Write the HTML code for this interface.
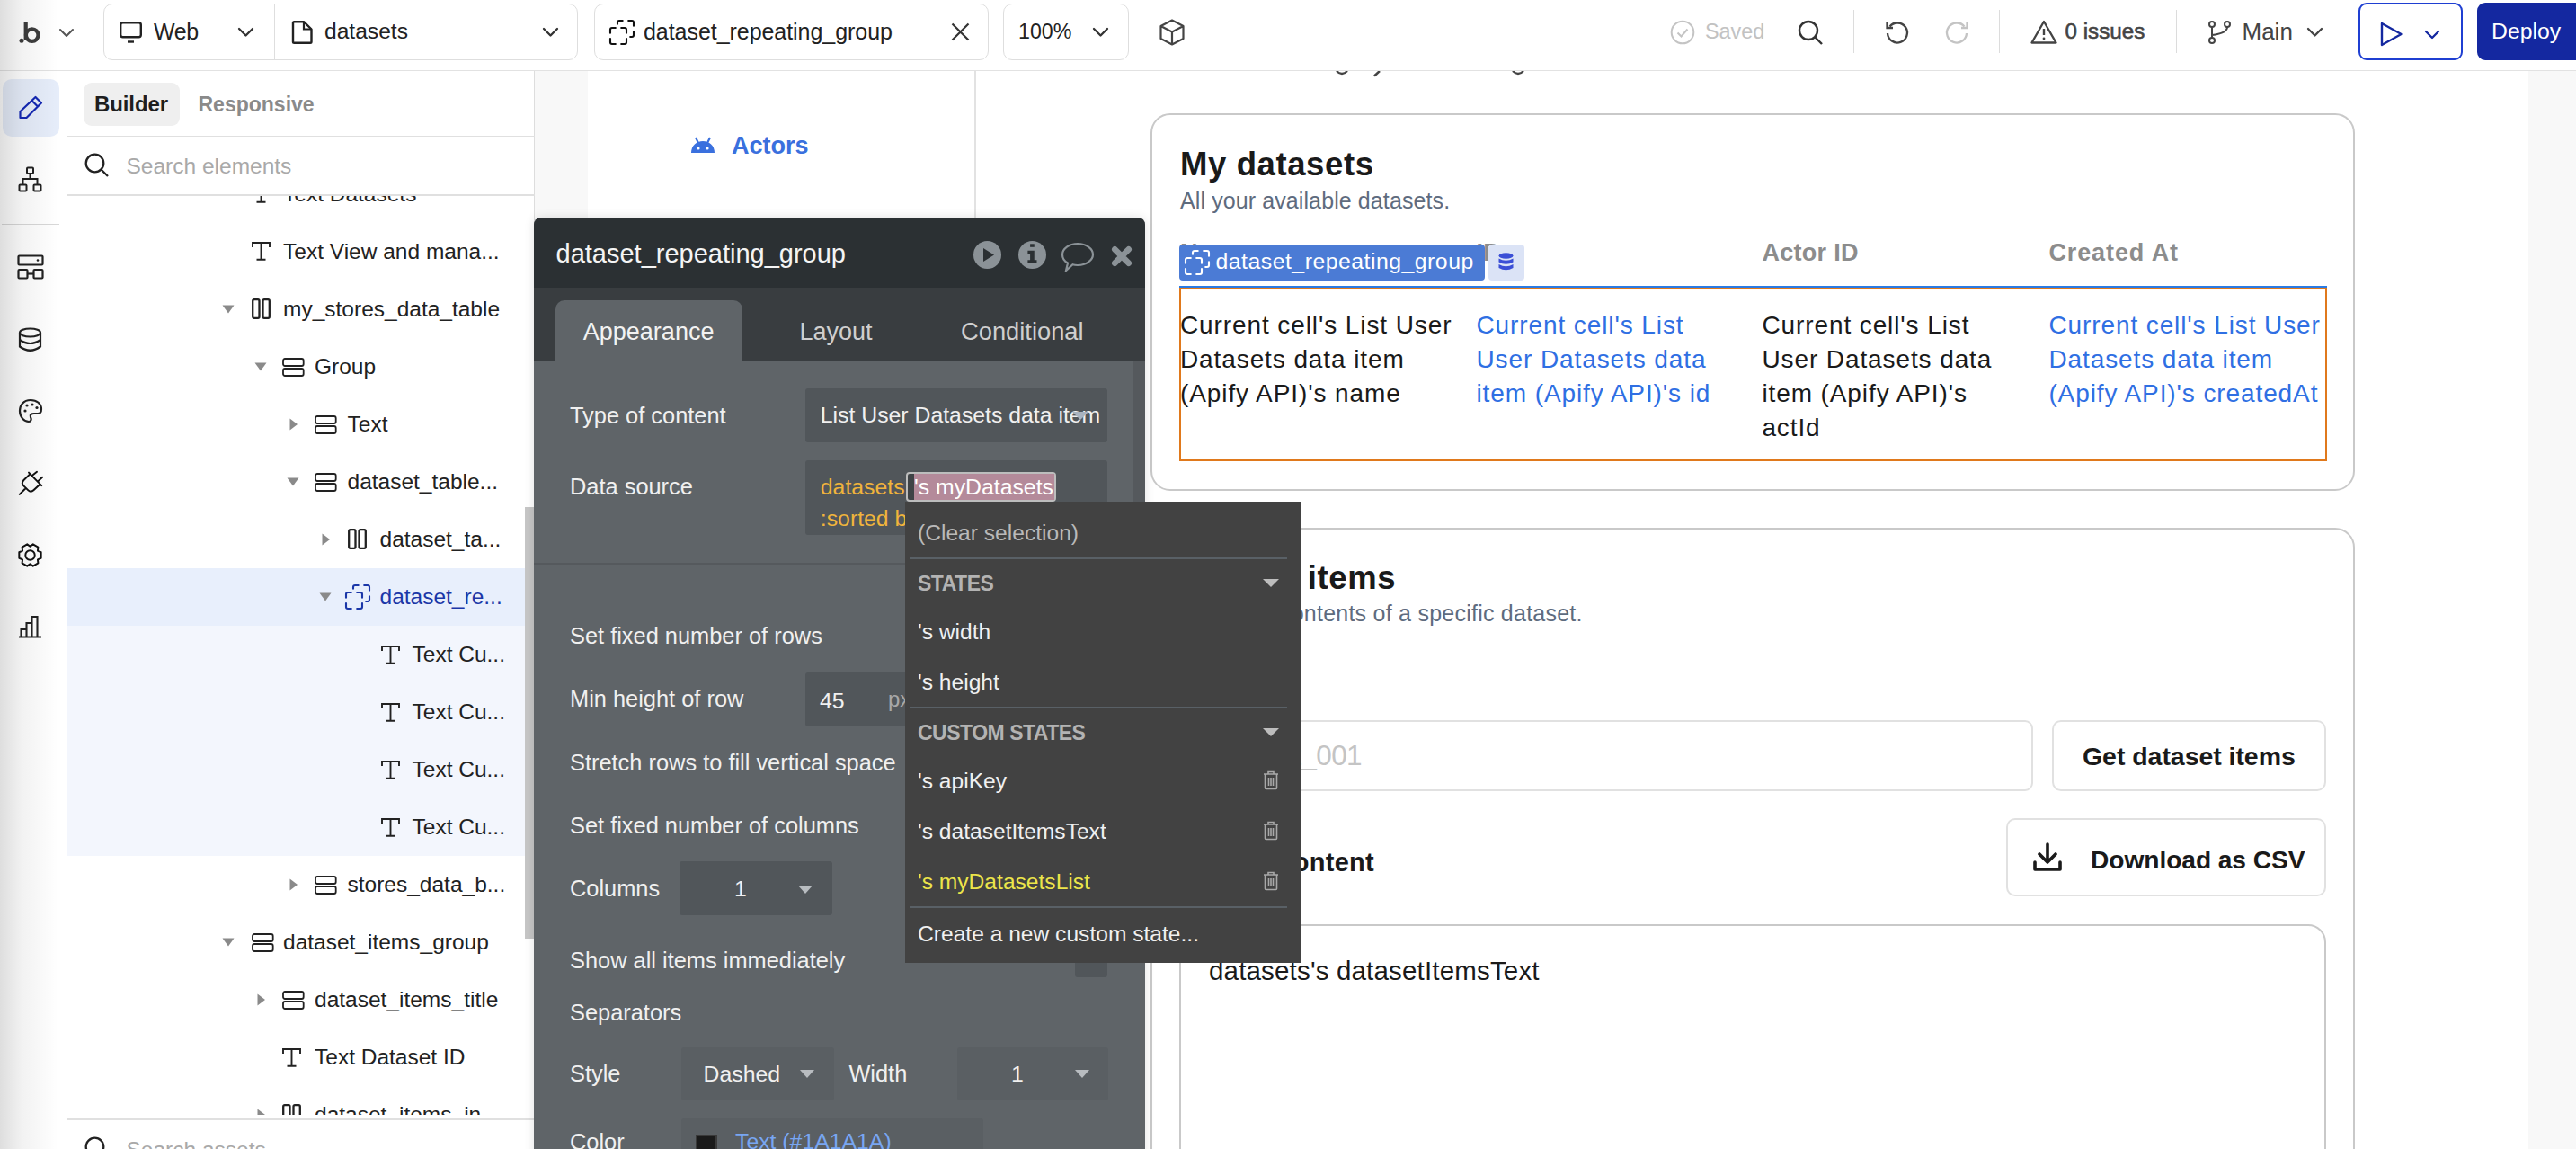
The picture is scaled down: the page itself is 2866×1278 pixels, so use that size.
<!DOCTYPE html><html><head><meta charset="utf-8"><style>
html,body{margin:0;padding:0;}
body{width:2866px;height:1278px;overflow:hidden;position:relative;background:#fff;font-family:"Liberation Sans",sans-serif;}
.a{position:absolute;box-sizing:border-box;}
.t{position:absolute;white-space:nowrap;line-height:1;}
</style></head><body>
<div class="a" style="left:595px;top:79px;width:2271px;height:1199px;background:#f8f8f8"></div>
<div class="a" style="left:654px;top:79px;width:2159px;height:1199px;background:#fff"></div>
<div class="a" style="left:1084px;top:79px;width:2px;height:181px;background:#e2e2e2"></div>
<svg class="a" style="left:767px;top:152px;" width="30" height="19" viewBox="0 0 30 19" fill="none"><path d="M2 18 C2 10 8 5 15 5 C22 5 28 10 28 18 Z" fill="#3a70de"/><path d="M7 1 L10 7 M23 1 L20 7" stroke="#3a70de" stroke-width="2.2"/><circle cx="10" cy="13" r="1.6" fill="#fff"/><circle cx="20" cy="13" r="1.6" fill="#fff"/></svg>
<div class="t" style="left:814px;top:149.14px;font-size:27px;color:#3a70de;font-weight:700;letter-spacing:0px;">Actors</div>
<svg class="a" style="left:1485px;top:74px;" width="220" height="12" viewBox="0 0 220 12" fill="none"><path d="M2 5 Q8 11 14 5" stroke="#444" stroke-width="2.4"/><path d="M50 5 L44 10.5" stroke="#444" stroke-width="2.4"/><path d="M198 5 Q204 11 210 5" stroke="#444" stroke-width="2.4"/></svg>
<div class="a" style="left:1280px;top:126px;width:1340px;height:420px;border:2px solid #c9c9c9;border-radius:22px;background:#fff"></div>
<div class="t" style="left:1313px;top:165.10px;font-size:36.5px;color:#1a1a1a;font-weight:700;letter-spacing:0.6px;">My datasets</div>
<div class="t" style="left:1313px;top:211.34px;font-size:25px;color:#5e6b7e;font-weight:400;letter-spacing:0.1px;">All your available datasets.</div>
<div class="t" style="left:1313px;top:268.14px;font-size:27px;color:#8c8c8c;font-weight:700;letter-spacing:0.3px;">Name</div>
<div class="t" style="left:1642.5px;top:268.14px;font-size:27px;color:#8c8c8c;font-weight:700;letter-spacing:0.3px;">ID</div>
<div class="t" style="left:1960.4px;top:268.14px;font-size:27px;color:#8c8c8c;font-weight:700;letter-spacing:0.3px;">Actor ID</div>
<div class="t" style="left:2279.4px;top:268.14px;font-size:27px;color:#8c8c8c;font-weight:700;letter-spacing:0.9px;">Created At</div>
<div class="a" style="left:1312px;top:272px;width:340px;height:40px;background:#4b7bd5;border-radius:4px"></div>
<svg class="a" style="left:1317px;top:277px;" width="30" height="30" viewBox="-1 -1 30 30" fill="none"><path d="M1 14.7 V11 Q1 9 3 9 H6.8 M13.2 9 H17 Q19 9 19 11 V14.7 M1 21.1 V25 Q1 27 3 27 H6.8 M13.2 27 H17 Q19 27 19 25 V21.1 M9 4.7 V3 Q9 1 11 1 H14.7 M21.2 1 H25 Q27 1 27 3 V6.7 M27 13.3 V17 Q27 19 25 19 H23.2" stroke="#fff" stroke-width="2.1" stroke-linecap="round" fill="none"/></svg>
<div class="t" style="left:1352.5px;top:279.01px;font-size:24.8px;color:#fff;font-weight:400;letter-spacing:0.5px;">dataset_repeating_group</div>
<div class="a" style="left:1656px;top:272px;width:40px;height:40px;background:#dbe3f6;border-radius:4px"></div>
<svg class="a" style="left:1667px;top:281px;" width="17" height="21" viewBox="0 0 17 21" fill="none"><ellipse cx="8.5" cy="3.5" rx="8" ry="3.2" fill="#3b4fd6"/><path d="M0.5 6.5 Q8.5 11 16.5 6.5 V10.5 Q8.5 15 0.5 10.5 Z" fill="#3b4fd6"/><path d="M0.5 13 Q8.5 17.5 16.5 13 V17 Q8.5 21.5 0.5 17 Z" fill="#3b4fd6"/></svg>
<div class="a" style="left:1312px;top:318px;width:1277px;height:2px;background:#2a7be4"></div>
<div class="a" style="left:1312px;top:320px;width:1277px;height:193px;border:2px solid #e0791c"></div>
<div class="t" style="left:1313px;top:347.80px;font-size:28px;color:#1a1a1a;font-weight:400;letter-spacing:0.9px;">Current cell&#x27;s List User</div>
<div class="t" style="left:1313px;top:386.00px;font-size:28px;color:#1a1a1a;font-weight:400;letter-spacing:0.9px;">Datasets data item</div>
<div class="t" style="left:1313px;top:424.20px;font-size:28px;color:#1a1a1a;font-weight:400;letter-spacing:0.9px;">(Apify API)&#x27;s name</div>
<div class="t" style="left:1642.5px;top:347.80px;font-size:28px;color:#2f6fe3;font-weight:400;letter-spacing:0.9px;">Current cell&#x27;s List</div>
<div class="t" style="left:1642.5px;top:386.00px;font-size:28px;color:#2f6fe3;font-weight:400;letter-spacing:0.9px;">User Datasets data</div>
<div class="t" style="left:1642.5px;top:424.20px;font-size:28px;color:#2f6fe3;font-weight:400;letter-spacing:0.9px;">item (Apify API)&#x27;s id</div>
<div class="t" style="left:1960.4px;top:347.80px;font-size:28px;color:#1a1a1a;font-weight:400;letter-spacing:0.9px;">Current cell&#x27;s List</div>
<div class="t" style="left:1960.4px;top:386.00px;font-size:28px;color:#1a1a1a;font-weight:400;letter-spacing:0.9px;">User Datasets data</div>
<div class="t" style="left:1960.4px;top:424.20px;font-size:28px;color:#1a1a1a;font-weight:400;letter-spacing:0.9px;">item (Apify API)&#x27;s</div>
<div class="t" style="left:1960.4px;top:462.40px;font-size:28px;color:#1a1a1a;font-weight:400;letter-spacing:0.9px;">actId</div>
<div class="t" style="left:2279.4px;top:347.80px;font-size:28px;color:#2f6fe3;font-weight:400;letter-spacing:0.9px;">Current cell&#x27;s List User</div>
<div class="t" style="left:2279.4px;top:386.00px;font-size:28px;color:#2f6fe3;font-weight:400;letter-spacing:0.9px;">Datasets data item</div>
<div class="t" style="left:2279.4px;top:424.20px;font-size:28px;color:#2f6fe3;font-weight:400;letter-spacing:0.9px;">(Apify API)&#x27;s createdAt</div>
<div class="a" style="left:1280px;top:587px;width:1340px;height:713px;border:2px solid #c9c9c9;border-radius:22px;background:#fff"></div>
<div class="t" style="left:1308px;top:625.10px;font-size:36.5px;color:#1a1a1a;font-weight:700;letter-spacing:0.6px;">Dataset items</div>
<div class="t" style="left:1319.4px;top:669.84px;font-size:25px;color:#5e6b7e;font-weight:400;letter-spacing:0.24px;">View the contents of a specific dataset.</div>
<div class="a" style="left:1313px;top:801px;width:949px;height:79px;border:2px solid #e1e1e1;border-radius:9px"></div>
<div class="t" style="left:0px;top:825.34px;font-size:31.5px;color:#c4c4c4;font-weight:400;letter-spacing:-0.6px;left:auto;right:1351.0px;">dataset_001</div>
<div class="a" style="left:2283px;top:801px;width:305px;height:79px;border:2px solid #e1e1e1;border-radius:10px"></div>
<div class="t" style="left:2317px;top:826.87px;font-size:28.5px;color:#1a1a1a;font-weight:700;letter-spacing:-0.05px;">Get dataset items</div>
<div class="t" style="left:1307px;top:944.95px;font-size:29px;color:#1a1a1a;font-weight:700;letter-spacing:0.3px;">Dataset content</div>
<div class="a" style="left:2232px;top:910px;width:356px;height:87px;border:2px solid #e1e1e1;border-radius:10px"></div>
<svg class="a" style="left:2261px;top:937px;" width="34" height="34" viewBox="0 0 34 34" fill="none"><path d="M17 2 V22 M8 13 L17 22 L26 13" stroke="#1a1a1a" stroke-width="3.6" stroke-linecap="round" stroke-linejoin="round"/><path d="M3 22 V30 H31 V22" stroke="#1a1a1a" stroke-width="3.6" stroke-linecap="round" stroke-linejoin="round"/></svg>
<div class="t" style="left:2326px;top:942.13px;font-size:28.2px;color:#1a1a1a;font-weight:700;letter-spacing:-0.08px;">Download as CSV</div>
<div class="a" style="left:1312px;top:1028px;width:1276px;height:292px;border:2px solid #c9c9c9;border-radius:20px"></div>
<div class="t" style="left:1345px;top:1065.03px;font-size:29.5px;color:#1a1a1a;font-weight:400;letter-spacing:0.17px;">datasets's datasetItemsText</div>
<div class="a" style="left:0px;top:0px;width:2866px;height:79px;background:#fff;border-bottom:1.5px solid #e2e2e2"></div>
<svg class="a" style="left:20px;top:22px;" width="28" height="28" viewBox="0 0 28 28" fill="none"><circle cx="4" cy="23.3" r="2.5" fill="#3d3d3d"/><path d="M8.7 2 V22" stroke="#3d3d3d" stroke-width="4.2"/><circle cx="15.7" cy="17.1" r="6.8" stroke="#3d3d3d" stroke-width="4.2"/></svg>
<svg class="a" style="left:65.0px;top:30.5px;" width="18" height="11.0" viewBox="0 0 18 11.0" fill="none"><path d="M2 2 L9.0 9.0 L16 2" stroke="#555" stroke-width="2" stroke-linecap="round" stroke-linejoin="round"/></svg>
<div class="a" style="left:115px;top:4px;width:528px;height:63px;border:1.5px solid #dedede;border-radius:10px"></div>
<div class="a" style="left:304.5px;top:5px;width:1.5px;height:61px;background:#dedede"></div>
<svg class="a" style="left:133px;top:24px;" width="25" height="24" viewBox="0 0 25 24" fill="none"><rect x="1.2" y="1.2" width="22.6" height="16" rx="2.5" stroke="#222" stroke-width="2.4"/><path d="M9 22.5 H16" stroke="#222" stroke-width="2.4"/></svg>
<div class="t" style="left:171px;top:22.59px;font-size:25px;color:#222;font-weight:400;letter-spacing:-0.4px;">Web</div>
<svg class="a" style="left:264.0px;top:30.25px;" width="19" height="11.5" viewBox="0 0 19 11.5" fill="none"><path d="M2 2 L9.5 9.5 L17 2" stroke="#333" stroke-width="2.3" stroke-linecap="round" stroke-linejoin="round"/></svg>
<svg class="a" style="left:324px;top:23px;" width="24" height="26" viewBox="0 0 24 26" fill="none"><path d="M2 2.5 Q2 1.2 3.3 1.2 H14 L22.5 9.5 V23.5 Q22.5 24.8 21.2 24.8 H3.3 Q2 24.8 2 23.5 Z" stroke="#222" stroke-width="2.4" stroke-linejoin="round"/><path d="M14 1.2 V9.5 H22.5" stroke="#222" stroke-width="2.2"/></svg>
<div class="t" style="left:361px;top:22.93px;font-size:24.6px;color:#222;font-weight:400;letter-spacing:0px;">datasets</div>
<svg class="a" style="left:602.5px;top:30.25px;" width="19" height="11.5" viewBox="0 0 19 11.5" fill="none"><path d="M2 2 L9.5 9.5 L17 2" stroke="#333" stroke-width="2.3" stroke-linecap="round" stroke-linejoin="round"/></svg>
<div class="a" style="left:661px;top:4px;width:439px;height:63px;border:1.5px solid #dedede;border-radius:10px"></div>
<svg class="a" style="left:677px;top:21px;" width="30" height="30" viewBox="-1 -1 30 30" fill="none"><path d="M1 14.7 V11 Q1 9 3 9 H6.8 M13.2 9 H17 Q19 9 19 11 V14.7 M1 21.1 V25 Q1 27 3 27 H6.8 M13.2 27 H17 Q19 27 19 25 V21.1 M9 4.7 V3 Q9 1 11 1 H14.7 M21.2 1 H25 Q27 1 27 3 V6.7 M27 13.3 V17 Q27 19 25 19 H23.2" stroke="#111" stroke-width="2.1" stroke-linecap="round" fill="none"/></svg>
<div class="t" style="left:716px;top:22.59px;font-size:25px;color:#222;font-weight:400;letter-spacing:-0.05px;">dataset_repeating_group</div>
<svg class="a" style="left:1058px;top:25px;" width="21" height="21" viewBox="0 0 21 21" fill="none"><path d="M1.5 1.5 L19.5 19.5 M19.5 1.5 L1.5 19.5" stroke="#333" stroke-width="2.2"/></svg>
<div class="a" style="left:1116px;top:4px;width:140px;height:63px;border:1.5px solid #dedede;border-radius:10px"></div>
<div class="t" style="left:1133px;top:24.11px;font-size:23.2px;color:#222;font-weight:400;letter-spacing:0px;">100%</div>
<svg class="a" style="left:1214.5px;top:30.25px;" width="19" height="11.5" viewBox="0 0 19 11.5" fill="none"><path d="M2 2 L9.5 9.5 L17 2" stroke="#333" stroke-width="2.3" stroke-linecap="round" stroke-linejoin="round"/></svg>
<svg class="a" style="left:1290px;top:21px;" width="28" height="30" viewBox="0 0 28 30" fill="none"><path d="M14 1.5 L26.5 8 V22 L14 28.5 L1.5 22 V8 Z M1.5 8 L14 14.5 L26.5 8 M14 14.5 V28.5" stroke="#444" stroke-width="2.2" stroke-linejoin="round"/></svg>
<svg class="a" style="left:1858px;top:22px;" width="28" height="28" viewBox="0 0 28 28" fill="none"><circle cx="14" cy="14" r="12.3" stroke="#c4c4c4" stroke-width="2"/><path d="M8.5 14.5 L12.5 18.5 L19.5 10.5" stroke="#c4c4c4" stroke-width="2"/></svg>
<div class="t" style="left:1897px;top:23.94px;font-size:23.4px;color:#c2c2c2;font-weight:400;letter-spacing:0px;">Saved</div>
<svg class="a" style="left:2000px;top:22px;" width="29" height="29" viewBox="0 0 29 29" fill="none"><circle cx="12" cy="12" r="10" stroke="#333" stroke-width="2.4"/><path d="M19.5 19.5 L27 27" stroke="#333" stroke-width="2.4"/></svg>
<div class="a" style="left:2061.5px;top:11px;width:1.5px;height:48px;background:#dcdcdc"></div>
<svg class="a" style="left:2097px;top:22px;" width="28" height="28" viewBox="0 0 28 28" fill="none"><path d="M5.5 7.5 A11 11 0 1 1 3 15" stroke="#444" stroke-width="2.3"/><path d="M2.5 2.5 V9 H9" stroke="#444" stroke-width="2.3"/></svg>
<svg class="a" style="left:2163px;top:22px;" width="28" height="28" viewBox="0 0 28 28" fill="none"><path d="M22.5 7.5 A11 11 0 1 0 25 15" stroke="#c4c4c4" stroke-width="2.3"/><path d="M25.5 2.5 V9 H19" stroke="#c4c4c4" stroke-width="2.3"/></svg>
<div class="a" style="left:2223.5px;top:11px;width:1.5px;height:48px;background:#dcdcdc"></div>
<svg class="a" style="left:2259px;top:22px;" width="30" height="27" viewBox="0 0 30 27" fill="none"><path d="M15 2 L28.5 25.5 H1.5 Z" stroke="#444" stroke-width="2.3" stroke-linejoin="round"/><path d="M15 10 V17" stroke="#444" stroke-width="2.4"/><circle cx="15" cy="21" r="1.4" fill="#444"/></svg>
<div class="t" style="left:2297.5px;top:23.26px;font-size:24.2px;color:#444;font-weight:400;letter-spacing:0px;-webkit-text-stroke:0.6px #444;">0 issues</div>
<div class="a" style="left:2420.5px;top:11px;width:1.5px;height:48px;background:#dcdcdc"></div>
<svg class="a" style="left:2456px;top:23px;" width="28" height="26" viewBox="0 0 28 26" fill="none"><circle cx="5" cy="4" r="3" stroke="#444" stroke-width="2"/><circle cx="5" cy="22" r="3" stroke="#444" stroke-width="2"/><circle cx="22" cy="4" r="3" stroke="#444" stroke-width="2"/><path d="M5 7 V19 M22 7 Q22 14 5 16" stroke="#444" stroke-width="2"/></svg>
<div class="t" style="left:2494.5px;top:21.74px;font-size:26px;color:#444;font-weight:400;letter-spacing:0px;">Main</div>
<svg class="a" style="left:2566.0px;top:30.25px;" width="19" height="11.5" viewBox="0 0 19 11.5" fill="none"><path d="M2 2 L9.5 9.5 L17 2" stroke="#444" stroke-width="2.3" stroke-linecap="round" stroke-linejoin="round"/></svg>
<div class="a" style="left:2624px;top:3px;width:116px;height:64px;border:2px solid #1f3fd2;border-radius:9px"></div>
<svg class="a" style="left:2648px;top:24px;" width="26" height="28" viewBox="0 0 26 28" fill="none"><path d="M2 2 L23.5 14 L2 26 Z" stroke="#1428a0" stroke-width="2.4" stroke-linejoin="round"/></svg>
<svg class="a" style="left:2697.0px;top:33.0px;" width="18" height="11.0" viewBox="0 0 18 11.0" fill="none"><path d="M2 2 L9.0 9.0 L16 2" stroke="#1428a0" stroke-width="2.3" stroke-linecap="round" stroke-linejoin="round"/></svg>
<div class="a" style="left:2756px;top:3px;width:124px;height:64px;background:#1428a0;border-radius:9px"></div>
<div class="t" style="left:2772px;top:22.76px;font-size:24.8px;color:#fff;font-weight:400;letter-spacing:0px;">Deploy</div>
<div class="a" style="left:0px;top:79px;width:75px;height:1199px;background:#fff;border-right:1.5px solid #dcdcdc"></div>
<div class="a" style="left:2.5px;top:88px;width:63.5px;height:63.5px;background:#e6edfa;border-radius:10px"></div>
<svg class="a" style="left:20px;top:106px;" width="28" height="28" viewBox="0 0 28 28" fill="none"><path d="M19.5 2 L26 8.5 L9.5 25 H2.5 V18 Z M15.5 6 L22 12.5" stroke="#1428b4" stroke-width="2.2" stroke-linejoin="round"/></svg>
<svg class="a" style="left:20px;top:185px;" width="27" height="30" viewBox="0 0 27 30" fill="none"><rect x="10" y="1.5" width="7" height="6.5" rx="1" stroke="#222" stroke-width="2"/><rect x="1.5" y="20.5" width="8" height="7" rx="1" stroke="#222" stroke-width="2"/><rect x="17.5" y="20.5" width="8" height="7" rx="1" stroke="#222" stroke-width="2"/><path d="M13.5 8 V14 M5.5 20.5 V14 H21.5 V20.5" stroke="#222" stroke-width="2"/></svg>
<div class="a" style="left:2px;top:248.5px;width:64px;height:1.5px;background:#d8d8d8"></div>
<svg class="a" style="left:19px;top:283px;" width="30" height="28" viewBox="0 0 30 28" fill="none"><rect x="1.5" y="1.5" width="27" height="10" rx="1" stroke="#222" stroke-width="2.2"/><circle cx="23" cy="6.5" r="1.3" fill="#222"/><rect x="1.5" y="17" width="10" height="9.5" rx="1" stroke="#222" stroke-width="2.2"/><rect x="18.5" y="17" width="10" height="9.5" rx="1" stroke="#222" stroke-width="2.2"/><path d="M11.5 21.5 H18.5" stroke="#222" stroke-width="2.2"/></svg>
<svg class="a" style="left:20px;top:364px;" width="27" height="28" viewBox="0 0 27 28" fill="none"><ellipse cx="13.5" cy="6" rx="11.5" ry="4.5" stroke="#222" stroke-width="2.2"/><path d="M2 6 V21.5 Q13.5 30 25 21.5 V6 M2 14 Q13.5 22 25 14" stroke="#222" stroke-width="2.2"/></svg>
<svg class="a" style="left:20px;top:443px;" width="28" height="28" viewBox="0 0 28 28" fill="none"><path d="M14 2 C6 2 2 8 2 14 C2 21 7 26 12 26 C15 26 15 23 14 21 C13 18 15 17 18 17 H22 C25 17 26 15 26 12 C26 6 21 2 14 2 Z" stroke="#222" stroke-width="2.2"/><circle cx="8" cy="14" r="1.6" fill="#222"/><circle cx="10" cy="8" r="1.6" fill="#222"/><circle cx="16" cy="7" r="1.6" fill="#222"/><circle cx="21" cy="10.5" r="1.6" fill="#222"/></svg>
<svg class="a" style="left:14px;top:515px;" width="40" height="45" viewBox="0 0 40 45" fill="none"><path d="M18 10.6 L32.2 25.1 M19.5 12.1 L12.2 19.3 Q9.4 22.5 12.3 25.4 L17.4 30.4 Q20.3 33.2 23.4 30.3 L30.7 23.6 M22 13.7 L27 9.8 M28.6 20 L33.1 15.7 M13.7 29 L7.8 34.9" stroke="#111" stroke-width="2" stroke-linecap="round" stroke-linejoin="round"/></svg>
<svg class="a" style="left:19.4px;top:603.2px;" width="29" height="29" viewBox="0 0 29 29" fill="none"><path d="M26.67 11.24 L26.67 17.76 L22.94 19.38 L23.41 23.41 L17.76 26.67 L14.50 24.25 L11.24 26.67 L5.59 23.41 L6.06 19.38 L2.33 17.76 L2.33 11.24 L6.06 9.63 L5.59 5.59 L11.24 2.33 L14.50 4.75 L17.76 2.33 L23.41 5.59 L22.94 9.63 Z" stroke="#111" stroke-width="2" stroke-linejoin="round"/><circle cx="14.5" cy="14.5" r="5.2" stroke="#111" stroke-width="2"/></svg>
<svg class="a" style="left:20px;top:684px;" width="27" height="26" viewBox="0 0 27 26" fill="none"><path d="M1 24.5 H26 M3.5 24.5 V16 H9.5 V24.5 M9.5 24.5 V9 H15.5 V24.5 M15.5 24.5 V2 H21.5 V24.5" stroke="#222" stroke-width="2.1"/></svg>
<div class="a" style="left:0px;top:0px;width:70px;height:1278px;background:linear-gradient(to right, rgba(0,0,0,0.13), rgba(0,0,0,0.05) 25px, rgba(0,0,0,0) 65px)"></div>
<div class="a" style="left:75px;top:79px;width:520px;height:1199px;background:#fff;border-right:1.5px solid #dddddd"></div>
<div class="a" style="left:92.5px;top:92px;width:107.5px;height:48px;background:#efefef;border-radius:9px"></div>
<div class="t" style="left:105px;top:104.18px;font-size:24px;color:#1e1e1e;font-weight:700;letter-spacing:-0.1px;">Builder</div>
<div class="t" style="left:220.5px;top:105.03px;font-size:23px;color:#8a8a8a;font-weight:700;letter-spacing:0px;">Responsive</div>
<div class="a" style="left:75px;top:150.5px;width:520px;height:1.5px;background:#e0e0e0"></div>
<svg class="a" style="left:94px;top:170px;" width="28" height="28" viewBox="0 0 28 28" fill="none"><circle cx="11.5" cy="11.5" r="9.8" stroke="#222" stroke-width="2.3"/><path d="M18.5 18.5 L26 26" stroke="#222" stroke-width="2.3"/></svg>
<div class="t" style="left:140.5px;top:172.76px;font-size:24.5px;color:#a9a9a9;font-weight:400;letter-spacing:0px;">Search elements</div>
<div class="a" style="left:75px;top:216px;width:520px;height:1.5px;background:#e0e0e0"></div>
<div class="a" style="left:75px;top:217.5px;width:509px;height:1022.5px;overflow:hidden">
<svg class="a" style="left:205px;top:-12.5px" width="21" height="21" viewBox="0 0 21 21"><path d="M1 6 V1 H20 V6 M10.5 1 V19.7 M5.5 19.7 H15.5" stroke="#222" stroke-width="1.9" fill="none"/></svg>
<div class="t" style="left:240px;top:-13.84px;font-size:24.5px;color:#222;letter-spacing:0px">Text Datasets</div>
<svg class="a" style="left:205px;top:51.5px" width="21" height="21" viewBox="0 0 21 21"><path d="M1 6 V1 H20 V6 M10.5 1 V19.7 M5.5 19.7 H15.5" stroke="#222" stroke-width="1.9" fill="none"/></svg>
<div class="t" style="left:240px;top:50.16px;font-size:24.5px;color:#222;letter-spacing:0px">Text View and mana...</div>
<svg class="a" style="left:172px;top:121.0px" width="14" height="10"><path d="M0.5 0.5 H13.5 L7 9.5 Z" fill="#8a8a8a"/></svg>
<svg class="a" style="left:205px;top:114.5px" width="21" height="23"><rect x="1.2" y="1.2" width="7.3" height="20.6" rx="1.5" stroke="#222" stroke-width="2.3" fill="none"/><rect x="12.5" y="1.2" width="7.3" height="20.6" rx="1.5" stroke="#222" stroke-width="2.3" fill="none"/></svg>
<div class="t" style="left:240px;top:114.66px;font-size:24.5px;color:#222;letter-spacing:0px">my_stores_data_table</div>
<svg class="a" style="left:208px;top:185.0px" width="14" height="10"><path d="M0.5 0.5 H13.5 L7 9.5 Z" fill="#8a8a8a"/></svg>
<svg class="a" style="left:239px;top:180.5px" width="25" height="21" viewBox="0 0 25 21"><rect x="1" y="1" width="22.7" height="8" rx="2" stroke="#222" stroke-width="1.8" fill="none"/><rect x="1" y="12" width="22.7" height="8" rx="2" stroke="#222" stroke-width="1.8" fill="none"/></svg>
<div class="t" style="left:275px;top:178.66px;font-size:24.5px;color:#222;letter-spacing:0px">Group</div>
<svg class="a" style="left:247px;top:247.0px" width="10" height="14"><path d="M0.5 0.5 V13.5 L9 7 Z" fill="#8a8a8a"/></svg>
<svg class="a" style="left:275px;top:244.5px" width="25" height="21" viewBox="0 0 25 21"><rect x="1" y="1" width="22.7" height="8" rx="2" stroke="#222" stroke-width="1.8" fill="none"/><rect x="1" y="12" width="22.7" height="8" rx="2" stroke="#222" stroke-width="1.8" fill="none"/></svg>
<div class="t" style="left:311.5px;top:242.66px;font-size:24.5px;color:#222;letter-spacing:0px">Text</div>
<svg class="a" style="left:244px;top:313.0px" width="14" height="10"><path d="M0.5 0.5 H13.5 L7 9.5 Z" fill="#8a8a8a"/></svg>
<svg class="a" style="left:275px;top:308.5px" width="25" height="21" viewBox="0 0 25 21"><rect x="1" y="1" width="22.7" height="8" rx="2" stroke="#222" stroke-width="1.8" fill="none"/><rect x="1" y="12" width="22.7" height="8" rx="2" stroke="#222" stroke-width="1.8" fill="none"/></svg>
<div class="t" style="left:311.5px;top:306.66px;font-size:24.5px;color:#222;letter-spacing:0px">dataset_table...</div>
<svg class="a" style="left:283px;top:375.0px" width="10" height="14"><path d="M0.5 0.5 V13.5 L9 7 Z" fill="#8a8a8a"/></svg>
<svg class="a" style="left:312px;top:370.5px" width="21" height="23"><rect x="1.2" y="1.2" width="7.3" height="20.6" rx="1.5" stroke="#222" stroke-width="2.3" fill="none"/><rect x="12.5" y="1.2" width="7.3" height="20.6" rx="1.5" stroke="#222" stroke-width="2.3" fill="none"/></svg>
<div class="t" style="left:347.5px;top:370.66px;font-size:24.5px;color:#222;letter-spacing:0px">dataset_ta...</div>
<div class="a" style="left:0;top:414.0px;width:509px;height:64px;background:#e8effc"></div>
<svg class="a" style="left:280px;top:441.0px" width="14" height="10"><path d="M0.5 0.5 H13.5 L7 9.5 Z" fill="#8a8a8a"/></svg>
<svg class="a" style="left:308px;top:431.5px" width="30" height="30" viewBox="-1 -1 30 30"><path d="M1 14.7 V11 Q1 9 3 9 H6.8 M13.2 9 H17 Q19 9 19 11 V14.7 M1 21.1 V25 Q1 27 3 27 H6.8 M13.2 27 H17 Q19 27 19 25 V21.1 M9 4.7 V3 Q9 1 11 1 H14.7 M21.2 1 H25 Q27 1 27 3 V6.7 M27 13.3 V17 Q27 19 25 19 H23.2" stroke="#1b37a8" stroke-width="2.1" stroke-linecap="round" fill="none"/></svg>
<div class="t" style="left:347.5px;top:434.66px;font-size:24.5px;color:#1b37a8;letter-spacing:0px">dataset_re...</div>
<div class="a" style="left:0;top:478.0px;width:509px;height:256px;background:#f3f6fd"></div>
<svg class="a" style="left:349px;top:500.0px" width="21" height="21" viewBox="0 0 21 21"><path d="M1 6 V1 H20 V6 M10.5 1 V19.7 M5.5 19.7 H15.5" stroke="#222" stroke-width="1.9" fill="none"/></svg>
<div class="t" style="left:383.5px;top:498.66px;font-size:24.5px;color:#222;letter-spacing:0px">Text Cu...</div>
<svg class="a" style="left:349px;top:564.0px" width="21" height="21" viewBox="0 0 21 21"><path d="M1 6 V1 H20 V6 M10.5 1 V19.7 M5.5 19.7 H15.5" stroke="#222" stroke-width="1.9" fill="none"/></svg>
<div class="t" style="left:383.5px;top:562.66px;font-size:24.5px;color:#222;letter-spacing:0px">Text Cu...</div>
<svg class="a" style="left:349px;top:628.0px" width="21" height="21" viewBox="0 0 21 21"><path d="M1 6 V1 H20 V6 M10.5 1 V19.7 M5.5 19.7 H15.5" stroke="#222" stroke-width="1.9" fill="none"/></svg>
<div class="t" style="left:383.5px;top:626.66px;font-size:24.5px;color:#222;letter-spacing:0px">Text Cu...</div>
<svg class="a" style="left:349px;top:692.0px" width="21" height="21" viewBox="0 0 21 21"><path d="M1 6 V1 H20 V6 M10.5 1 V19.7 M5.5 19.7 H15.5" stroke="#222" stroke-width="1.9" fill="none"/></svg>
<div class="t" style="left:383.5px;top:690.66px;font-size:24.5px;color:#222;letter-spacing:0px">Text Cu...</div>
<svg class="a" style="left:247px;top:759.0px" width="10" height="14"><path d="M0.5 0.5 V13.5 L9 7 Z" fill="#8a8a8a"/></svg>
<svg class="a" style="left:275px;top:756.5px" width="25" height="21" viewBox="0 0 25 21"><rect x="1" y="1" width="22.7" height="8" rx="2" stroke="#222" stroke-width="1.8" fill="none"/><rect x="1" y="12" width="22.7" height="8" rx="2" stroke="#222" stroke-width="1.8" fill="none"/></svg>
<div class="t" style="left:311.5px;top:754.66px;font-size:24.5px;color:#222;letter-spacing:0px">stores_data_b...</div>
<svg class="a" style="left:172px;top:825.0px" width="14" height="10"><path d="M0.5 0.5 H13.5 L7 9.5 Z" fill="#8a8a8a"/></svg>
<svg class="a" style="left:205px;top:820.5px" width="25" height="21" viewBox="0 0 25 21"><rect x="1" y="1" width="22.7" height="8" rx="2" stroke="#222" stroke-width="1.8" fill="none"/><rect x="1" y="12" width="22.7" height="8" rx="2" stroke="#222" stroke-width="1.8" fill="none"/></svg>
<div class="t" style="left:240px;top:818.66px;font-size:24.5px;color:#222;letter-spacing:0px">dataset_items_group</div>
<svg class="a" style="left:211px;top:887.0px" width="10" height="14"><path d="M0.5 0.5 V13.5 L9 7 Z" fill="#8a8a8a"/></svg>
<svg class="a" style="left:239px;top:884.5px" width="25" height="21" viewBox="0 0 25 21"><rect x="1" y="1" width="22.7" height="8" rx="2" stroke="#222" stroke-width="1.8" fill="none"/><rect x="1" y="12" width="22.7" height="8" rx="2" stroke="#222" stroke-width="1.8" fill="none"/></svg>
<div class="t" style="left:275px;top:882.66px;font-size:24.5px;color:#222;letter-spacing:0px">dataset_items_title</div>
<svg class="a" style="left:239px;top:948.0px" width="21" height="21" viewBox="0 0 21 21"><path d="M1 6 V1 H20 V6 M10.5 1 V19.7 M5.5 19.7 H15.5" stroke="#222" stroke-width="1.9" fill="none"/></svg>
<div class="t" style="left:275px;top:946.66px;font-size:24.5px;color:#222;letter-spacing:0px">Text Dataset ID</div>
<svg class="a" style="left:211px;top:1015.0px" width="10" height="14"><path d="M0.5 0.5 V13.5 L9 7 Z" fill="#8a8a8a"/></svg>
<svg class="a" style="left:239px;top:1010.5px" width="21" height="23"><rect x="1.2" y="1.2" width="7.3" height="20.6" rx="1.5" stroke="#222" stroke-width="2.3" fill="none"/><rect x="12.5" y="1.2" width="7.3" height="20.6" rx="1.5" stroke="#222" stroke-width="2.3" fill="none"/></svg>
<div class="t" style="left:275px;top:1010.66px;font-size:24.5px;color:#222;letter-spacing:0px">dataset_items_in</div>
</div>
<div class="a" style="left:584px;top:564px;width:10px;height:480px;background:#c6c6c6"></div>
<div class="a" style="left:75px;top:1244px;width:520px;height:1.5px;background:#e0e0e0"></div>
<svg class="a" style="left:94px;top:1264px;" width="28" height="28" viewBox="0 0 28 28" fill="none"><circle cx="11.5" cy="11.5" r="9.8" stroke="#222" stroke-width="2.3"/></svg>
<div class="t" style="left:140.5px;top:1267.26px;font-size:24.5px;color:#a9a9a9;font-weight:400;letter-spacing:0px;">Search assets</div>
<div class="a" style="left:594px;top:242px;width:680px;height:1100px;border-radius:8px;background:#5f6468;box-shadow:0 0 12px rgba(0,0,0,0.12);overflow:hidden">
</div>
<div class="a" style="left:594px;top:242px;width:680px;height:77.5px;background:#2b3033;border-radius:8px 8px 0 0"></div>
<div class="t" style="left:618.5px;top:268.45px;font-size:29px;color:#f4f4f4;font-weight:400;letter-spacing:0px;">dataset_repeating_group</div>
<svg class="a" style="left:1082px;top:267px;" width="33" height="33" viewBox="0 0 33 33" fill="none"><circle cx="16.5" cy="16.5" r="15.5" fill="#8b9297"/><path d="M12 9 L24 16.5 L12 24 Z" fill="#2b3033"/></svg>
<svg class="a" style="left:1132px;top:267px;" width="33" height="33" viewBox="0 0 33 33" fill="none"><circle cx="16.5" cy="16.5" r="15.5" fill="#8b9297"/><rect x="14.1" y="4.3" width="4.65" height="3.5" fill="#2b3033"/><path d="M11.4 11.7 H18.75 V22.2 H21.5 V26 H11.4 V22.2 H14.1 V15.6 H11.4 Z" fill="#2b3033"/></svg>
<svg class="a" style="left:1180px;top:269px;" width="38" height="34" viewBox="0 0 38 34" fill="none"><path d="M19 2 C28.5 2 36 7.5 36 14 C36 20.5 28.5 26 19 26 C17 26 15 25.8 13.5 25.3 L6 32 L8 23.5 C4 21.5 2 18 2 14 C2 7.5 9.5 2 19 2 Z" stroke="#8b9297" stroke-width="2.2"/></svg>
<svg class="a" style="left:1236px;top:272.5px;" width="24" height="24" viewBox="0 0 24 24" fill="none"><path d="M4.3 4.3 L19.7 19.7 M19.7 4.3 L4.3 19.7" stroke="#8b9297" stroke-width="6.6" stroke-linecap="round"/></svg>
<div class="a" style="left:594px;top:319.5px;width:680px;height:82.5px;background:#393d40"></div>
<div class="a" style="left:618px;top:334px;width:208px;height:68px;background:#5f6468;border-radius:10px 10px 0 0"></div>
<div class="t" style="left:648.8px;top:355.64px;font-size:27px;color:#f2f2f2;font-weight:400;letter-spacing:0px;">Appearance</div>
<div class="t" style="left:889.4px;top:355.64px;font-size:27px;color:#cfcfcf;font-weight:400;letter-spacing:0px;">Layout</div>
<div class="t" style="left:1069px;top:355.39px;font-size:27.3px;color:#cfcfcf;font-weight:400;letter-spacing:0px;">Conditional</div>
<div class="a" style="left:1260px;top:402px;width:14px;height:598px;background:#55595d"></div>
<div class="t" style="left:634px;top:449.80px;font-size:25.4px;color:#f0f0f0;font-weight:400;letter-spacing:0px;">Type of content</div>
<div class="a" style="left:896px;top:432px;width:336px;height:59.5px;background:#51565a;border-radius:3px"></div>
<div class="t" style="left:912.8px;top:449.61px;font-size:24.8px;color:#f0f0f0;font-weight:400;letter-spacing:0px;">List User Datasets data item</div>
<svg class="a" style="left:1193px;top:458px;" width="18" height="9" viewBox="0 0 18 9" fill="none"><path d="M0 0 H18 L9 9 Z" fill="#a9b3bf"/></svg>
<div class="t" style="left:634px;top:528.70px;font-size:25.4px;color:#f0f0f0;font-weight:400;letter-spacing:0px;">Data source</div>
<div class="a" style="left:896px;top:512.4px;width:336px;height:82.60000000000002px;background:#51565a;border-radius:3px"></div>
<div class="t" style="left:912.8px;top:529.51px;font-size:24.8px;color:#f0b43c;font-weight:400;letter-spacing:0px;">datasets</div>
<div class="t" style="left:912.8px;top:565.01px;font-size:24.8px;color:#f0b43c;font-weight:400;letter-spacing:0px;">:sorted by</div>
<div class="a" style="left:1007.5px;top:524.5px;width:167.0px;height:33.5px;border:2px solid #bdbdbd;border-radius:4px;background:#3f4346"></div>
<div class="a" style="left:1016.5px;top:526.5px;width:156.0px;height:29.5px;background:#b48a9a"></div>
<div class="t" style="left:1017px;top:529.51px;font-size:24.8px;color:#ffffff;font-weight:400;letter-spacing:0px;">'s myDatasets</div>
<div class="a" style="left:594px;top:625.5px;width:666px;height:2.0px;background:#55595d"></div>
<div class="t" style="left:634px;top:695.20px;font-size:25.4px;color:#f0f0f0;font-weight:400;letter-spacing:0px;">Set fixed number of rows</div>
<div class="t" style="left:634px;top:765.20px;font-size:25.4px;color:#f0f0f0;font-weight:400;letter-spacing:0px;">Min height of row</div>
<div class="a" style="left:896px;top:747.5px;width:204px;height:60.0px;background:#51565a;border-radius:3px"></div>
<div class="t" style="left:912px;top:767.51px;font-size:24.8px;color:#f0f0f0;font-weight:400;letter-spacing:0px;">45</div>
<div class="t" style="left:988px;top:765.68px;font-size:24px;color:#a8a8a8;font-weight:400;letter-spacing:0px;">px</div>
<div class="t" style="left:634px;top:836.20px;font-size:25.4px;color:#f0f0f0;font-weight:400;letter-spacing:0px;">Stretch rows to fill vertical space</div>
<div class="t" style="left:634px;top:906.20px;font-size:25.4px;color:#f0f0f0;font-weight:400;letter-spacing:0px;">Set fixed number of columns</div>
<div class="t" style="left:634px;top:975.70px;font-size:25.4px;color:#f0f0f0;font-weight:400;letter-spacing:0px;">Columns</div>
<div class="a" style="left:756px;top:958px;width:170px;height:59.5px;background:#51565a;border-radius:3px"></div>
<div class="t" style="left:817px;top:976.51px;font-size:24.8px;color:#f0f0f0;font-weight:400;letter-spacing:0px;">1</div>
<svg class="a" style="left:888px;top:985px;" width="16" height="9" viewBox="0 0 16 9" fill="none"><path d="M0 0 H16 L8 9 Z" fill="#b8bcc0"/></svg>
<div class="t" style="left:634px;top:1056.20px;font-size:25.4px;color:#f0f0f0;font-weight:400;letter-spacing:0px;">Show all items immediately</div>
<div class="a" style="left:1195.5px;top:1050px;width:36.5px;height:37px;background:#51565a;border-radius:3px"></div>
<div class="t" style="left:634px;top:1114.20px;font-size:25.4px;color:#f0f0f0;font-weight:400;letter-spacing:0px;">Separators</div>
<div class="t" style="left:634px;top:1181.70px;font-size:25.4px;color:#f0f0f0;font-weight:400;letter-spacing:0px;">Style</div>
<div class="a" style="left:758px;top:1165px;width:170px;height:58.5px;background:#5a5f63;border-radius:3px"></div>
<div class="t" style="left:782.6px;top:1182.51px;font-size:24.8px;color:#f0f0f0;font-weight:400;letter-spacing:0px;">Dashed</div>
<svg class="a" style="left:890px;top:1190px;" width="16" height="9" viewBox="0 0 16 9" fill="none"><path d="M0 0 H16 L8 9 Z" fill="#b8bcc0"/></svg>
<div class="t" style="left:944.4px;top:1181.70px;font-size:25.4px;color:#f0f0f0;font-weight:400;letter-spacing:0px;">Width</div>
<div class="a" style="left:1064.5px;top:1165px;width:168.5px;height:58.5px;background:#5a5f63;border-radius:3px"></div>
<div class="t" style="left:1125px;top:1182.51px;font-size:24.8px;color:#f0f0f0;font-weight:400;letter-spacing:0px;">1</div>
<svg class="a" style="left:1196px;top:1190px;" width="16" height="9" viewBox="0 0 16 9" fill="none"><path d="M0 0 H16 L8 9 Z" fill="#b8bcc0"/></svg>
<div class="t" style="left:634px;top:1258.20px;font-size:25.4px;color:#f0f0f0;font-weight:400;letter-spacing:0px;">Color</div>
<div class="a" style="left:758px;top:1244px;width:336px;height:56px;background:#5a5f63;border-radius:3px"></div>
<div class="a" style="left:773.5px;top:1261.5px;width:24.0px;height:28.5px;background:#1a1a1a;border:2px solid #3a3a3a"></div>
<div class="t" style="left:818px;top:1258.01px;font-size:24.8px;color:#78a6f2;font-weight:400;letter-spacing:0px;">Text (#1A1A1A)</div>
<div class="a" style="left:1007px;top:558px;width:441px;height:513px;background:#424242"></div>
<div class="t" style="left:1021px;top:581.38px;font-size:24.6px;color:#b9b9b9;font-weight:400;letter-spacing:0px;">(Clear selection)</div>
<div class="a" style="left:1013px;top:619.5px;width:419px;height:2.0px;background:#596066"></div>
<div class="a" style="left:1013px;top:786px;width:419px;height:2px;background:#596066"></div>
<div class="a" style="left:1013px;top:1007.7px;width:419px;height:2.0px;background:#596066"></div>
<div class="t" style="left:1021px;top:638.03px;font-size:23px;color:#b3b3b3;font-weight:700;letter-spacing:-0.5px;">STATES</div>
<svg class="a" style="left:1405px;top:644px;" width="18" height="9" viewBox="0 0 18 9" fill="none"><path d="M0 0 H18 L9 9 Z" fill="#bdbdbd"/></svg>
<div class="t" style="left:1021px;top:690.98px;font-size:24.6px;color:#f0f0f0;font-weight:400;letter-spacing:0px;">'s width</div>
<div class="t" style="left:1021px;top:747.38px;font-size:24.6px;color:#f0f0f0;font-weight:400;letter-spacing:0px;">'s height</div>
<div class="t" style="left:1021px;top:804.03px;font-size:23px;color:#b3b3b3;font-weight:700;letter-spacing:-0.5px;">CUSTOM STATES</div>
<svg class="a" style="left:1405px;top:810px;" width="18" height="9" viewBox="0 0 18 9" fill="none"><path d="M0 0 H18 L9 9 Z" fill="#bdbdbd"/></svg>
<div class="t" style="left:1021px;top:856.98px;font-size:24.6px;color:#f0f0f0;font-weight:400;letter-spacing:0px;">'s apiKey</div>
<div class="t" style="left:1021px;top:912.98px;font-size:24.6px;color:#f0f0f0;font-weight:400;letter-spacing:0px;">'s datasetItemsText</div>
<div class="t" style="left:1021px;top:968.68px;font-size:24.6px;color:#ece54a;font-weight:400;letter-spacing:0px;">'s myDatasetsList</div>
<div class="t" style="left:1021px;top:1026.78px;font-size:24.6px;color:#f0f0f0;font-weight:400;letter-spacing:0px;">Create a new custom state...</div>
<svg class="a" style="left:1405px;top:857px;" width="18" height="22" viewBox="0 0 18 22" fill="none"><path d="M6 3.5 V1.5 H12 V3.5 M1 4 H17 M2.5 4.5 V19.5 Q2.5 20.5 3.5 20.5 H14.5 Q15.5 20.5 15.5 19.5 V4.5 M6.5 8 V17 M9 8 V17 M11.5 8 V17" stroke="#a8a8a8" stroke-width="1.6"/></svg>
<svg class="a" style="left:1405px;top:913px;" width="18" height="22" viewBox="0 0 18 22" fill="none"><path d="M6 3.5 V1.5 H12 V3.5 M1 4 H17 M2.5 4.5 V19.5 Q2.5 20.5 3.5 20.5 H14.5 Q15.5 20.5 15.5 19.5 V4.5 M6.5 8 V17 M9 8 V17 M11.5 8 V17" stroke="#a8a8a8" stroke-width="1.6"/></svg>
<svg class="a" style="left:1405px;top:969px;" width="18" height="22" viewBox="0 0 18 22" fill="none"><path d="M6 3.5 V1.5 H12 V3.5 M1 4 H17 M2.5 4.5 V19.5 Q2.5 20.5 3.5 20.5 H14.5 Q15.5 20.5 15.5 19.5 V4.5 M6.5 8 V17 M9 8 V17 M11.5 8 V17" stroke="#a8a8a8" stroke-width="1.6"/></svg>
</body></html>
